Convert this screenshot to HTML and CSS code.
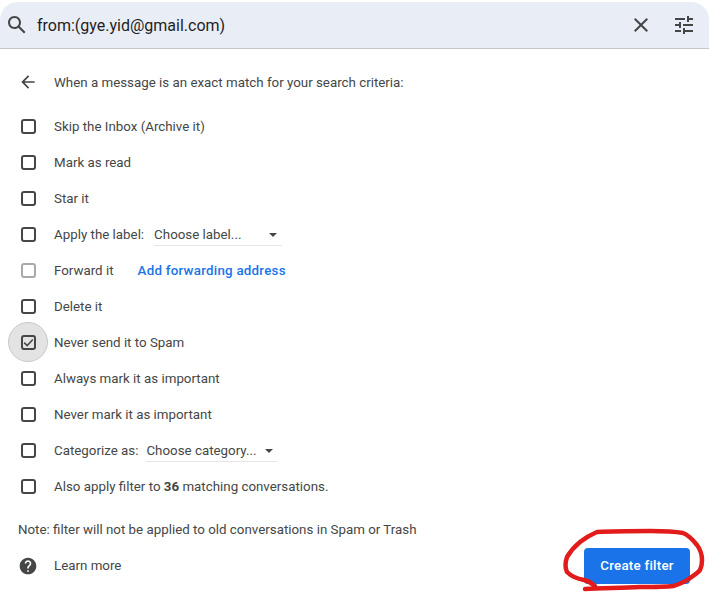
FILE: index.html
```html
<!DOCTYPE html>
<html lang="en">
<head>
<meta charset="utf-8">
<title>Create filter</title>
<link rel="stylesheet" href="styles.css">
</head>
<body>
<div class="searchbar">
  <svg class="icon-search" viewBox="0 0 24 24" width="24" height="24"><path fill="#444746" d="M20.49 19l-5.73-5.73C15.53 12.2 16 10.91 16 9.5 16 5.91 13.09 3 9.5 3S3 5.91 3 9.5 5.91 16 9.5 16c1.41 0 2.7-.47 3.77-1.24L19 20.49 20.49 19zM5 9.5C5 7.01 7.01 5 9.5 5S14 7.01 14 9.5 11.99 14 9.5 14 5 11.99 5 9.5z"/></svg>
  <span class="query">from:(gye.yid@gmail.com)</span>
  <svg class="icon-close" viewBox="0 0 24 24" width="24" height="24"><path fill="#444746" d="M19 6.41L17.59 5 12 10.59 6.41 5 5 6.41 10.59 12 5 17.59 6.41 19 12 13.41 17.59 19 19 17.59 13.41 12z"/></svg>
  <svg class="icon-tune" viewBox="0 0 24 24" width="24" height="24"><path fill="#444746" d="M3 17v2h6v-2H3zM3 5v2h10V5H3zm10 16v-2h8v-2h-8v-2h-2v6h2zM7 9v2H3v2h4v2h2V9H7zm14 4v-2H11v2h10zm-6-4h2V7h4V5h-4V3h-2v6z"/></svg>
</div>
<main class="panel">
  <div class="head">
    <svg class="icon-back" viewBox="0 0 24 24" width="20" height="20"><path fill="#444746" d="M20 11H7.83l5.59-5.59L12 4l-8 8 8 8 1.41-1.41L7.83 13H20v-2z"/></svg>
    <span>When a message is an exact match for your search criteria:</span>
  </div>
  <ul class="rows">
    <li class="row"><span class="box"></span><span>Skip the Inbox (Archive it)</span></li>
    <li class="row"><span class="box"></span><span>Mark as read</span></li>
    <li class="row"><span class="box"></span><span>Star it</span></li>
    <li class="row"><span class="box"></span><span>Apply the label:</span><span class="select select-label">Choose label...<i class="caret"></i></span></li>
    <li class="row"><span class="box box-disabled"></span><span>Forward it</span><a class="link">Add forwarding address</a></li>
    <li class="row"><span class="box"></span><span>Delete it</span></li>
    <li class="row"><span class="halo"></span><span class="box box-checked"><svg viewBox="0 0 11 11" width="11" height="11"><path fill="none" stroke="#444746" stroke-width="1.5" d="M1.2 5.6l3 3 5.6-6"/></svg></span><span>Never send it to Spam</span></li>
    <li class="row"><span class="box"></span><span>Always mark it as important</span></li>
    <li class="row"><span class="box"></span><span>Never mark it as important</span></li>
    <li class="row"><span class="box"></span><span>Categorize as:</span><span class="select select-cat">Choose category...<i class="caret"></i></span></li>
    <li class="row"><span class="box"></span><span>Also apply filter to <b>36</b> matching conversations.</span></li>
  </ul>
  <p class="note">Note: filter will not be applied to old conversations in Spam or Trash</p>
  <div class="foot">
    <svg class="icon-help" viewBox="0 0 24 24" width="20" height="20"><path fill="#444746" d="M12 2C6.48 2 2 6.48 2 12s4.48 10 10 10 10-4.48 10-10S17.52 2 12 2zm1 17h-2v-2h2v2zm2.07-7.75l-.9.92C13.45 12.9 13 13.5 13 15h-2v-.5c0-1.1.45-2.1 1.17-2.83l1.24-1.26c.37-.36.59-.86.59-1.41 0-1.1-.9-2-2-2s-2 .9-2 2H8c0-2.21 1.79-4 4-4s4 1.79 4 4c0 .88-.36 1.68-.93 2.25z"/></svg>
    <span class="learn">Learn more</span>
    <button class="create">Create filter</button>
  </div>
</main>
<svg class="scribble" viewBox="0 0 709 603" width="709" height="603"><path fill="none" stroke="#e21b1b" stroke-width="4.5" stroke-linecap="round" stroke-linejoin="round" d="M585 589C600 588 620 588 640 587C655 587 665 587 673 586C680 584 684 582 687 580C693 576 698 573 700 570C702 566 702 563 702 560C702 554 700 549 697 545C693 540 688 535 683 533C672 531 662 531 650 531C632 531 615 531 597 532C590 535 585 538 580 542C574 547 570 552 567 557C565 563 565 568 567 572C572 577 578 579 584 580C588 581 592 583 595 586"/></svg>
</body>
</html>
```
FILE: styles.css
```css
* { box-sizing: border-box; }
html, body { margin: 0; padding: 0; }
body {
  width: 709px;
  height: 603px;
  overflow: hidden;
  background: #fff;
  font-family: Roboto, "Liberation Sans", sans-serif;
  font-size: 13.33px;
  color: #444746;
  position: relative;
}
.searchbar {
  margin-top: 2px;
  height: 47px;
  background: #e9edf6;
  border-bottom: 1px solid #c4c7c9;
  border-radius: 18px 18px 0 0;
  display: flex;
  align-items: center;
  padding: 0 13px 0 5px;
}
.query { font-size: 16px; color: #1f1f1f; margin-left: 8px; flex: 1; }
.icon-close { margin-right: 19px; }
.panel { display: flex; flex-direction: column; padding-left: 18px; }
.head { display: flex; align-items: center; height: 36px; margin-top: 15px; }
.icon-back { margin-right: 16px; }
.rows { list-style: none; margin: 8px 0 0; padding: 0; }
.row { display: flex; align-items: center; height: 36px; position: relative; }
.box {
  width: 15px;
  height: 15px;
  margin: 0 18px 0 3px;
  border: 2px solid #444746;
  border-radius: 3px;
  display: flex;
  align-items: center;
  justify-content: center;
  flex: none;
  position: relative;
}
.box-disabled { border-color: #a8a9aa; }
.halo {
  position: absolute;
  left: -10px;
  top: -2px;
  width: 40px;
  height: 40px;
  border-radius: 50%;
  background: #e3e3e3;
  border: 1px solid #c9c9c9;
}
.select {
  display: flex;
  align-items: center;
  height: 22px;
  margin-top: 1px;
  border-bottom: 1px solid #e6e6e6;
  position: relative;
}
.select-label { width: 128px; margin-left: 10px; }
.select-cat { width: 131px; margin-left: 8px; }
.caret {
  position: absolute;
  right: 5px;
  top: 9px;
  border-left: 4px solid transparent;
  border-right: 4px solid transparent;
  border-top: 4px solid #444746;
}
.select-cat .caret { right: 4px; }
.link { color: #1a73e8; margin-left: 24px; font-weight: 500; letter-spacing: .25px; }
.note { margin: 16px 0 0; height: 20px; line-height: 20px; }
.foot { display: flex; align-items: center; height: 36px; margin-top: 8px; padding-right: 19px; }
.icon-help { margin-right: 16px; }
.learn { flex: 1; margin-bottom: 2px; }
.create {
  width: 106px;
  height: 36px;
  background: #1a73e8;
  color: #fff;
  border: 0;
  border-radius: 4px;
  font: 500 13.33px Roboto, "Liberation Sans", sans-serif;
  letter-spacing: .25px;
  padding: 0 0 2px;
}
.scribble { position: absolute; left: 0; top: 0; pointer-events: none; }
```
